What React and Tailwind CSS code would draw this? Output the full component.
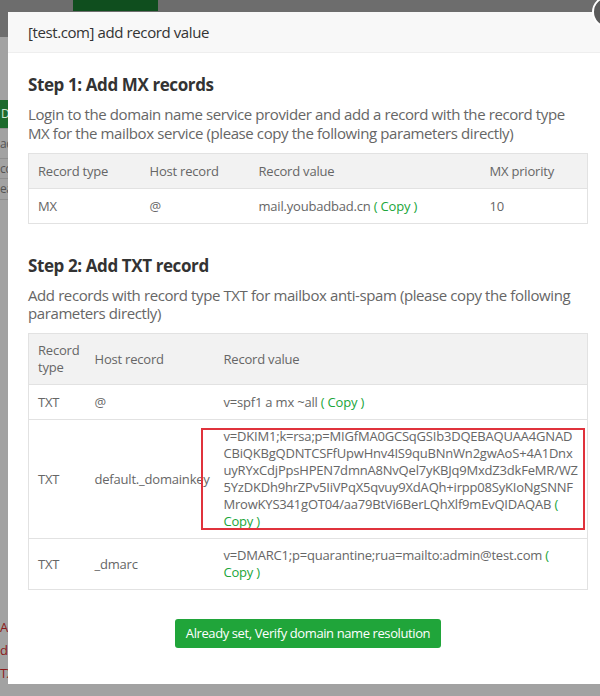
import { useState } from "react";

const mx = [{ type: "MX", host: "@", value: "mail.youbadbad.cn", prio: "10" }];

const txt = [
  { type: "TXT", host: "@", value: "v=spf1 a mx ~all" },
  {
    type: "TXT",
    host: "default._domainkey",
    value:
      "v=DKIM1;k=rsa;p=MIGfMA0GCSqGSIb3DQEBAQUAA4GNADCBiQKBgQDNTCSFfUpwHnv4IS9quBNnWn2gwAoS+4A1DnxuyRYxCdjPpsHPEN7dmnA8NvQel7yKBJq9MxdZ3dkFeMR/WZ5YzDKDh9hrZPv5IiVPqX5qvuy9XdAQh+irpp08SyKIoNgSNNFMrowKYS341gOT04/aa79BtVi6BerLQhXlf9mEvQIDAQAB",
    dkim: true,
  },
  { type: "TXT", host: "_dmarc", value: "v=DMARC1;p=quarantine;rua=mailto:admin@test.com" },
];

function Copy({ onClick }) {
  return (
    <span onClick={onClick} className="text-[#20a53a] cursor-pointer break-normal">
      {" "}( Copy )
    </span>
  );
}

export default function App() {
  const [copied, setCopied] = useState("");

  return (
    <div
      className="relative w-[600px] h-[696px] overflow-hidden bg-[#a2a2a2] tracking-[-0.025em]"
      style={{ fontFamily: '"Open Sans", "Noto Sans", sans-serif' }}
    >
      {/* dimmed page behind the dialog */}
      <div className="h-[37px] bg-[#6d6d6d] flex">
        <div className="ml-[73px] w-[85px] h-[11px] bg-[#0f4e1e]"></div>
      </div>
      <div className="mt-[63px] w-[60px] h-[28px] bg-[#1c6a2c] text-[#cfe6d2] text-[12px] leading-[28px] pl-[1px]">Del</div>
      <div className="w-[60px] text-[12px] text-[#555] leading-[20px]">
        <div className="border-t border-[#8f8f8f] h-[30px] leading-[30px]">add</div>
        <div className="border-t border-[#8f8f8f] h-[20px]">con</div>
        <div className="border-y border-[#8f8f8f] h-[22px]">ear</div>
      </div>
      <div className="absolute left-0 top-[616px] w-[60px] text-[13px] text-[#8b1a1a] leading-[23px]">
        <div>Add</div>
        <div>del</div>
        <div>TXT</div>
      </div>

      {/* dialog */}
      <div className="absolute left-[8px] top-[12px] w-[600px] h-[672px] bg-white">
        <div className="h-[41px] bg-[#f8f8f8] border-b border-[#eee] px-[20px] text-[15px] text-[#333] leading-[41px]">
          [test.com] add record value
        </div>
        <div className="px-[20px] pt-[20px] text-[#666]">
          <h2 className="text-[17px] font-bold text-[#333] leading-[24px]">Step 1: Add MX records</h2>
          <p className="mt-[8px] text-[15px] leading-[19px] w-[560px]">
            Login to the domain name service provider and add a record with the record type MX for the mailbox service (please copy the following parameters directly)
          </p>
          <table className="mt-[10px] w-[560px] border-collapse text-[13px] leading-[18px] table-fixed tracking-[-0.2px]">
            <thead>
              <tr className="bg-[#f2f2f2]">
                <th className="w-[112px] border border-[#e2e2e2] border-r-0 px-[9px] py-[8px] text-left font-normal">Record type</th>
                <th className="w-[109px] border-y border-[#e2e2e2] px-[9px] py-[8px] text-left font-normal">Host record</th>
                <th className="w-[231px] border-y border-[#e2e2e2] px-[9px] py-[8px] text-left font-normal">Record value</th>
                <th className="border border-[#e2e2e2] border-l-0 px-[9px] py-[8px] text-left font-normal">MX priority</th>
              </tr>
            </thead>
            <tbody>
              {mx.map((r) => (
                <tr key={r.type}>
                  <td className="border border-[#e2e2e2] border-r-0 px-[9px] py-[8px]">{r.type}</td>
                  <td className="border-b border-[#e2e2e2] px-[9px] py-[8px]">{r.host}</td>
                  <td className="border-b border-[#e2e2e2] px-[9px] py-[8px]">
                    {r.value}
                    <Copy onClick={() => setCopied(r.value)} />
                  </td>
                  <td className="border border-[#e2e2e2] border-l-0 px-[9px] py-[8px]">{r.prio}</td>
                </tr>
              ))}
            </tbody>
          </table>

          <h2 className="mt-[30px] text-[17px] font-bold text-[#333] leading-[24px]">Step 2: Add TXT record</h2>
          <p className="mt-[8px] text-[15px] leading-[18px] w-[560px]">
            Add records with record type TXT for mailbox anti-spam (please copy the following parameters directly)
          </p>
          <table className="mt-[11px] w-[560px] border-collapse text-[13px] leading-[18px] table-fixed tracking-[-0.2px]">
            <thead>
              <tr className="bg-[#f2f2f2] leading-[17px]">
                <th className="w-[57px] border border-[#e2e2e2] border-r-0 px-[9px] py-[8px] text-left font-normal">Record type</th>
                <th className="w-[129px] border-y border-[#e2e2e2] px-[9px] py-[8px] text-left font-normal">Host record</th>
                <th className="border border-[#e2e2e2] border-l-0 px-[9px] py-[8px] text-left font-normal">Record value</th>
              </tr>
            </thead>
            <tbody>
              {txt.map((r) => (
                <tr key={r.host}>
                  <td className="border border-[#e2e2e2] border-r-0 px-[9px] py-[8px]">{r.type}</td>
                  <td className="border-b border-[#e2e2e2] px-[9px] py-[8px] whitespace-nowrap">{r.host}</td>
                  <td className="relative border border-[#e2e2e2] border-l-0 px-[9px] py-[8px] leading-[17px]">
                    <span className="break-all">{r.value}</span>
                    <Copy onClick={() => setCopied(r.value)} />
                    {r.dkim && (
                      <div className="absolute top-[8px] bottom-[8px] left-[-14px] right-[2px] border-2 border-[#e0323c] pointer-events-none"></div>
                    )}
                  </td>
                </tr>
              ))}
            </tbody>
          </table>

          <div className="mt-[29px] flex justify-center w-[560px]">
            <button className="h-[29px] px-[11px] rounded-[3px] bg-[#20a53a] text-white text-[13px]">
              {copied ? "Already set, Verify domain name resolution" : "Already set, Verify domain name resolution"}
            </button>
          </div>
        </div>
      </div>

      {/* close button */}
      <div className="absolute left-[592px] top-[-4px] w-[32px] h-[32px] rounded-full bg-[#5b5b5b] border-2 border-white"></div>
    </div>
  );
}
